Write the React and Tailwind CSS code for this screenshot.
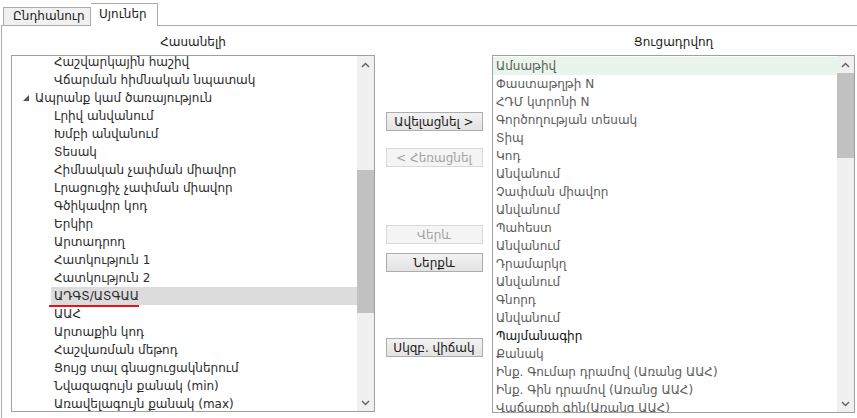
import React from "react";

const AVAILABLE = [
  { text: "Հաշվարկային հաշիվ", level: 1 },
  { text: "Վճարման հիմնական նպատակ", level: 1 },
  { text: "Ապրանք կամ ծառայություն", level: 0, open: true },
  { text: "Լրիվ անվանում", level: 1 },
  { text: "Խմբի անվանում", level: 1 },
  { text: "Տեսակ", level: 1 },
  { text: "Հիմնական չափման միավոր", level: 1 },
  { text: "Լրացուցիչ չափման միավոր", level: 1 },
  { text: "Գծիկավոր կոդ", level: 1 },
  { text: "Երկիր", level: 1 },
  { text: "Արտադրող", level: 1 },
  { text: "Հատկություն 1", level: 1 },
  { text: "Հատկություն 2", level: 1 },
  { text: "ԱԴԳՏ/ԱՏԳԱԱ", level: 1, selected: true },
  { text: "ԱԱՀ", level: 1 },
  { text: "Արտաքին կոդ", level: 1 },
  { text: "Հաշվառման մեթոդ", level: 1 },
  { text: "Ցույց տալ գնացուցակներում", level: 1 },
  { text: "Նվազագույն քանակ (min)", level: 1 },
  { text: "Առավելագույն քանակ (max)", level: 1 },
];

const SHOWN = [
  "Ամսաթիվ",
  "Փաստաթղթի N",
  "ՀԴՄ կտրոնի N",
  "Գործողության տեսակ",
  "Տիպ",
  "Կոդ",
  "Անվանում",
  "Չափման միավոր",
  "Անվանում",
  "Պահեստ",
  "Անվանում",
  "Դրամարկղ",
  "Անվանում",
  "Գնորդ",
  "Անվանում",
  "Պայմանագիր",
  "Քանակ",
  "Ինք. Գումար դրամով (Առանց ԱԱՀ)",
  "Ինք. Գին դրամով (Առանց ԱԱՀ)",
  "Վաճառքի գին(Առանց ԱԱՀ)",
];

function Chevron({ down }) {
  return (
    <svg width="9" height="6" viewBox="0 0 9 6" className={down ? "rotate-180" : ""}>
      <polyline points="1,5 4.5,1.5 8,5" fill="none" stroke="#606060" strokeWidth="1.4" />
    </svg>
  );
}

function Button({ children, disabled }) {
  return (
    <div
      className={
        "w-[97px] h-[19px] flex items-center justify-center border text-[12px] " +
        (disabled
          ? "border-[#d9d9d9] bg-[#f4f4f4] text-[#a3a3a3]"
          : "border-[#adadad] bg-gradient-to-b from-[#f2f2f2] to-[#e3e3e3] text-[#1a1a1a]")
      }
    >
      {children}
    </div>
  );
}

export default function App() {
  return (
    <div className="w-[857px] h-[418px] bg-white overflow-hidden font-['DejaVu_Sans',sans-serif] text-[12px]">
      {/* tabs */}
      <div className="flex items-end h-[25px] pl-[3px]">
        <div className="w-[88px] h-[18px] border border-b-0 border-[#acacac] bg-[#f0f0f0] text-[#222] pl-[9px] leading-[17px]">
          Ընդհանուր
        </div>
        <div className="w-[67px] h-[23px] -mb-px border border-b-0 border-l-0 border-[#acacac] bg-white text-[#222] pl-[8px] leading-[20px] relative z-10">
          Սյուներ
        </div>
      </div>

      <div className="ml-[1px] border-t border-l border-[#acacac] h-[400px] flex pl-[9px]">
        {/* available */}
        <div className="w-[364px] flex flex-col">
          <div className="h-[29px] flex items-center justify-center text-[#222] pt-[2px]">Հասանելի</div>
          <div className="h-[357px] border border-[#a0a0a0] flex overflow-hidden">
            <div className="flex-1 overflow-hidden">
              <div className="-mt-[3px]">
                {AVAILABLE.map((it, i) => (
                  <div key={i} className="h-[18px] flex items-center text-[#2b2b2b] relative">
                    {it.level === 0 ? (
                      <>
                        <div className="w-[23px] flex justify-end pr-[6px]">
                          <svg width="6" height="6" viewBox="0 0 6 6">
                            <polygon points="6,0 6,6 0,6" fill="#555" />
                          </svg>
                        </div>
                        <span>{it.text}</span>
                      </>
                    ) : (
                      <div className={"ml-[39px] pl-[3px] flex-1 h-full flex items-center " + (it.selected ? "bg-[#dcdcdc]" : "")}>
                        {it.text}
                        {it.selected && (
                          <div className="absolute left-[37px] bottom-[-2px] w-[90px] h-[2px] bg-[#e3141c]" />
                        )}
                      </div>
                    )}
                  </div>
                ))}
              </div>
            </div>
            <div className="w-[17px] bg-[#f0f0f0] flex flex-col">
              <div className="h-[17px] flex items-center justify-center"><Chevron /></div>
              <div className="h-[97px]" />
              <div className="h-[143px] bg-[#c1c1c1]" />
              <div className="flex-1" />
              <div className="h-[17px] flex items-center justify-center"><Chevron down /></div>
            </div>
          </div>
        </div>

        {/* buttons */}
        <div className="w-[117px] flex flex-col items-center pt-[86px] pl-[1px]">
          <Button>Ավելացնել &gt;</Button>
          <div className="h-[17px]" />
          <Button disabled>&lt; Հեռացնել</Button>
          <div className="h-[58px]" />
          <Button disabled>Վերև</Button>
          <div className="h-[9px]" />
          <Button>Ներքև</Button>
          <div className="h-[66px]" />
          <Button>Սկզբ. վիճակ</Button>
        </div>

        {/* shown */}
        <div className="w-[363px] flex flex-col">
          <div className="h-[29px] flex items-center justify-center text-[#222] pt-[2px]">Ցուցադրվող</div>
          <div className="h-[358px] border border-[#a0a0a0] flex overflow-hidden">
            <div className="flex-1 overflow-hidden pt-px">
              {SHOWN.map((t, i) => (
                <div
                  key={i}
                  className={
                    "h-[18px] flex items-center pl-[3px] " +
                    (i === 0 ? "bg-[#e9f5ec] " : "") +
                    (t === "Պայմանագիր" ? "text-[#111]" : "text-[#5c5c5c]")
                  }
                >
                  {t}
                </div>
              ))}
            </div>
            <div className="w-[17px] bg-[#f0f0f0] flex flex-col">
              <div className="h-[17px] flex items-center justify-center"><Chevron /></div>
              <div className="h-[85px] bg-[#c1c1c1]" />
              <div className="flex-1" />
              <div className="h-[17px] flex items-center justify-center"><Chevron down /></div>
            </div>
          </div>
        </div>
      </div>
    </div>
  );
}
